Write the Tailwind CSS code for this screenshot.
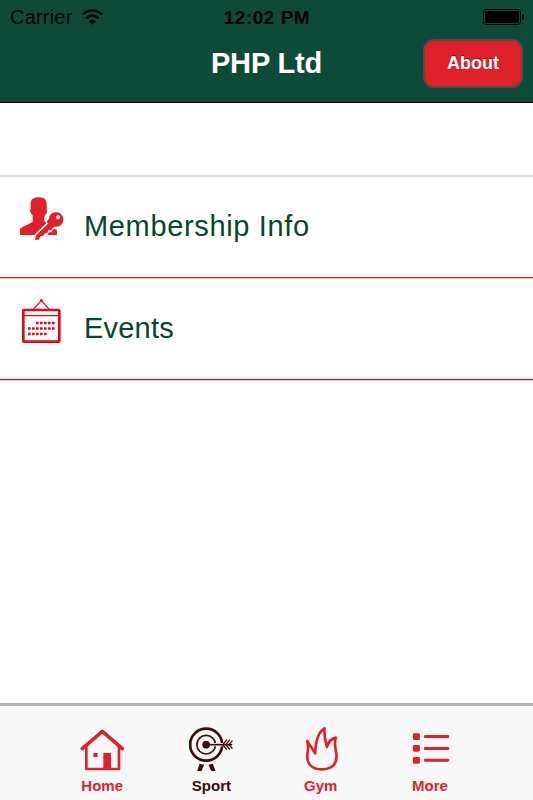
<!DOCTYPE html>
<html lang="en">

<head>
    <meta charset="UTF-8">
    <meta name="viewport" content="width=device-width, initial-scale=1.0">
    <title>PHP Ltd</title>
    <script src="https://cdn.jsdelivr.net/npm/@tailwindcss/browser@4"></script>
</head>

<body class="h-screen flex flex-col bg-white overflow-hidden font-['Liberation_Sans',Arial,sans-serif]">
    <header class="h-[103px] shrink-0 bg-[#0d4b38] border-b border-black">
        <!-- Status bar -->
        <div class="h-[34px] grid grid-cols-3 items-center pl-[10px] pr-[9px] text-black">
            <div class="flex items-center gap-[9px]">
                <span class="text-[20px] leading-none tracking-[0.2px]">Carrier</span>
                <svg class="w-[21px] h-[16px]" viewBox="0 0 63 48" fill="none" stroke="#000" stroke-width="6.500">
                    <path d="M2 16Q31-8 60 16" />
                    <path d="M12 28Q31 11 50 28" />
                    <path d="M20 37Q31 28 42 37L31 47Z" fill="#000" stroke="none" />
                </svg>
            </div>
            <span class="text-center text-[19px] leading-none font-bold tracking-[0.5px] whitespace-nowrap">12:02 PM</span>
            <div class="flex justify-end items-center">
                <div class="w-[38px] h-[16px] border border-black rounded-[3px] p-px">
                    <div class="w-full h-full bg-black rounded-[1px]"></div>
                </div>
                <div class="w-[2px] h-[6px] ml-px bg-black rounded-r-full"></div>
            </div>
        </div>
        <!-- Title bar -->
        <div class="grid grid-cols-[1fr_auto_1fr] items-center pt-[5px] pr-[10px] pl-[10px]">
            <h1 class="col-start-2 text-[29px] leading-none font-bold tracking-[-0.15px] text-white">PHP Ltd</h1>
            <button
                class="justify-self-end w-[100px] h-[49px] bg-[#de212b] border-2 border-[#6b4346] rounded-[11px] text-white text-[18px] font-bold text-shadow-[0_-1px_0_#8c1018]">About</button>
        </div>
    </header>

    <main class="flex-1 pt-[72px]">
        <ul class="border-t-2 border-[#dadada]">
            <li class="h-[101px] flex items-start pl-[20px] border-b border-[#dc1a24] shadow-[0_1px_0_#f3c4c7]">
                <svg class="w-[44px] h-[44px] mt-[20px] shrink-0" viewBox="30 21 132 132" fill="#de212b">
                    <path d="M62 42C62 28 70 22 86 22C102 22 110 28 110 42V59Q113 61 110 69Q108 74 105 75L102 87Q101 95 109 99L73 135H30V118Q31 113 39 110Q57 103 68 95V76Q63 74 60 64Q59 60 62 59Z" />
                    <path fill-rule="evenodd" d="M117 87C117 74 127 67 139 67C151 67 160 77 160 89C160 101 151 110 139 110H132L123 121H115L112 129L103 131L100 137L91 139L87 149H75L78 136L114 101Q106 94 117 87ZM144 76A6 6 0 1 0 144 88A6 6 0 1 0 144 76Z" />
                    <path d="M128 120L134 116L141 121V135H112L117 127H124Z" />
                </svg>
                <span class="ml-[20px] mt-[33px] text-[29px] leading-[32px] tracking-[0.65px] text-[#06472b] whitespace-nowrap">Membership Info</span>
            </li>
            <li class="h-[102px] flex items-start pl-[20px] border-b border-[#dc1a24] shadow-[0_1px_0_#f3c4c7]">
                <svg class="w-[44px] h-[46px] mt-[20px] shrink-0" viewBox="30 23 132 138" fill="none" stroke="#e30918">
                    <rect x="40" y="59" width="108" height="95" rx="2" stroke-width="8" />
                    <path d="M40 76H148" stroke-width="4" />
                    <path d="M70 57L94 31L118 57" stroke-width="4" />
                    <rect x="90" y="27" width="8" height="7" fill="#e30918" stroke="none" />
                    <path d="M78 98H136M54 114.500H136M54 131H112" stroke-width="8" stroke-dasharray="8 4" />
                </svg>
                <span class="ml-[20px] mt-[34px] text-[29px] leading-[32px] tracking-[0.2px] text-[#06472b] whitespace-nowrap">Events</span>
            </li>
        </ul>
    </main>

    <!-- Tab bar -->
    <nav class="h-[97px] shrink-0 bg-[#f8f8f8] border-t-3 border-[#b2b2b2] pl-[47.5px] pt-[21px]">
        <div class="w-[437.2px] grid grid-cols-4 text-center text-[15px] leading-[17px] font-bold text-[#de212b]">
            <a class="flex flex-col items-center">
                <svg class="w-[44px] h-[44px]" viewBox="31 96 132 132" fill="none" stroke="#de212b" stroke-width="8" stroke-linejoin="round" stroke-linecap="round">
                    <path d="M38 161L98 109L158 161" stroke-width="11" />
                    <path d="M50 154V222H148V154" />
                    <path d="M101 174H124V222H101ZM71 174H84V186H71Z" fill="#de212b" stroke="none" />
                </svg>
                <span class="mt-[6px]">Home</span>
            </a>
            <a class="flex flex-col items-center text-[#3b0b0d]">
                <svg class="w-[44px] h-[44px]" viewBox="28.500 96 132 132" fill="none" stroke="#3b0b0d">
                    <circle cx="80" cy="149" r="48" stroke-width="8" />
                    <circle cx="80" cy="149" r="28" stroke-width="5" />
                    <circle cx="80" cy="149" r="11" fill="#3b0b0d" stroke="none" />
                    <path d="M80 149H158" stroke="#f8f8f8" stroke-width="10" />
                    <circle cx="80" cy="149" r="11" fill="#3b0b0d" stroke="none" />
                    <path d="M80 149H158" stroke-width="5" />
                    <path d="M142 134L130 149L142 164M151 134L139 149L151 164M159 137L148 149L159 161" stroke-width="4" />
                    <path d="M60 206L74 209L66 228H53ZM87 209L100 206L108 228H95Z" fill="#3b0b0d" stroke="none" />
                </svg>
                <span class="mt-[6px]">Sport</span>
            </a>
            <a class="flex flex-col items-center">
                <svg class="w-[44px] h-[44px]" viewBox="26.400 96 132 132" fill="none" stroke="#de212b" stroke-width="8" stroke-linejoin="round" stroke-linecap="round">
                    <path d="M51 138L75 175C76 143 82 112 103 100Q101 124 110 156Q118 132 137 128C129 147 139 164 139 185C138 211 121 223 95 223C67 223 51 208 51 184C51 167 58 160 51 138Z" />
                </svg>
                <span class="mt-[6px]">Gym</span>
            </a>
            <a class="flex flex-col items-center">
                <svg class="w-[44px] h-[44px]" viewBox="24.300 96 132 132" fill="#de212b">
                    <rect x="39" y="115" width="21" height="20" rx="4" />
                    <rect x="39" y="150" width="21" height="20" rx="4" />
                    <rect x="39" y="186" width="21" height="20" rx="4" />
                    <rect x="72" y="120" width="76" height="9" rx="4" />
                    <rect x="72" y="156" width="76" height="9" rx="4" />
                    <rect x="72" y="191" width="76" height="9" rx="4" />
                </svg>
                <span class="mt-[6px]">More</span>
            </a>
        </div>
    </nav>
</body>

</html>
